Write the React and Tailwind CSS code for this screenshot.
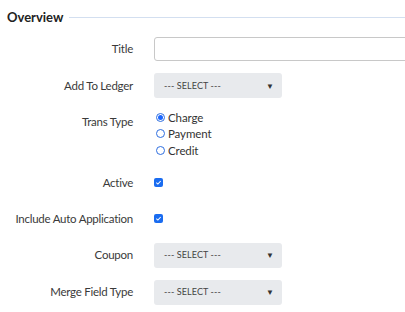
import React from "react";

function Select() {
  return (
    <div className="w-[128px] h-[25px] bg-[#e8eaed] rounded-[3px] flex items-center justify-between pl-[10px] pr-[8px]">
      <span className="text-[9px] text-[#444] tracking-[0.1px]">--- SELECT ---</span>
      <span className="text-[8px] text-[#333] leading-none">▼</span>
    </div>
  );
}

function Radio({ checked }) {
  return (
    <span className="w-[9px] h-[9px] rounded-full border border-[#2f6fe0] bg-white flex items-center justify-center">
      {checked && <span className="w-[5px] h-[5px] rounded-full bg-[#1a66ff]"></span>}
    </span>
  );
}

function Check() {
  return (
    <span className="w-[9px] h-[9px] rounded-[2px] bg-[#1a6cf0] flex items-center justify-center">
      <svg width="7" height="7" viewBox="0 0 8 8">
        <path d="M1.5 4.2 L3.3 5.8 L6.5 2.3" stroke="white" strokeWidth="1.2" fill="none" />
      </svg>
    </span>
  );
}

function Row({ label, children, className = "", labelClass = "items-center" }) {
  return (
    <div className={"flex " + className}>
      <div className={"w-[133px] shrink-0 flex justify-end text-[11.5px] tracking-[-0.25px] text-[#3a3a3a] whitespace-nowrap " + labelClass}>{label}</div>
      <div className="ml-[21px] flex-1 min-w-0">{children}</div>
    </div>
  );
}

export default function App() {
  return (
    <div className="w-[405px] h-[312px] bg-white overflow-hidden" style={{ fontFamily: "Lato, 'Open Sans', sans-serif" }}>
      <div className="flex items-center pt-[9px] pl-[7px]">
        <span className="text-[13px] font-bold text-[#222] leading-[16px]">Overview</span>
        <div className="flex-1 h-px bg-[#d3dff0] ml-[6px] mt-[1px]"></div>
      </div>
      <Row label="Title" className="mt-[12px] h-[24px]">
        <div className="h-[24px] w-[300px] border border-[#c8c8c8] rounded-[3px] bg-white"></div>
      </Row>
      <Row label="Add To Ledger" className="mt-[12px] h-[25px]">
        <Select />
      </Row>
      <Row label="Trans Type" className="mt-[11px]" labelClass="items-start pt-[4px]">
        <div className="flex flex-col text-[11.5px] tracking-[-0.1px] text-[#333]">
          {[
            ["Charge", true],
            ["Payment", false],
            ["Credit", false],
          ].map(([t, c]) => (
            <div key={t} className="flex items-center h-[16.5px] ml-[2px]">
              <Radio checked={c} />
              <span className="ml-[3px]">{t}</span>
            </div>
          ))}
        </div>
      </Row>
      <Row label="Active" className="mt-[14px] h-[20px]">
        <div className="h-[20px] flex items-center"><Check /></div>
      </Row>
      <Row label="Include Auto Application" className="mt-[16px] h-[20px]">
        <div className="h-[20px] flex items-center"><Check /></div>
      </Row>
      <Row label="Coupon" className="mt-[14px] h-[25px]">
        <Select />
      </Row>
      <Row label="Merge Field Type" className="mt-[12px] h-[25px]">
        <Select />
      </Row>
    </div>
  );
}
